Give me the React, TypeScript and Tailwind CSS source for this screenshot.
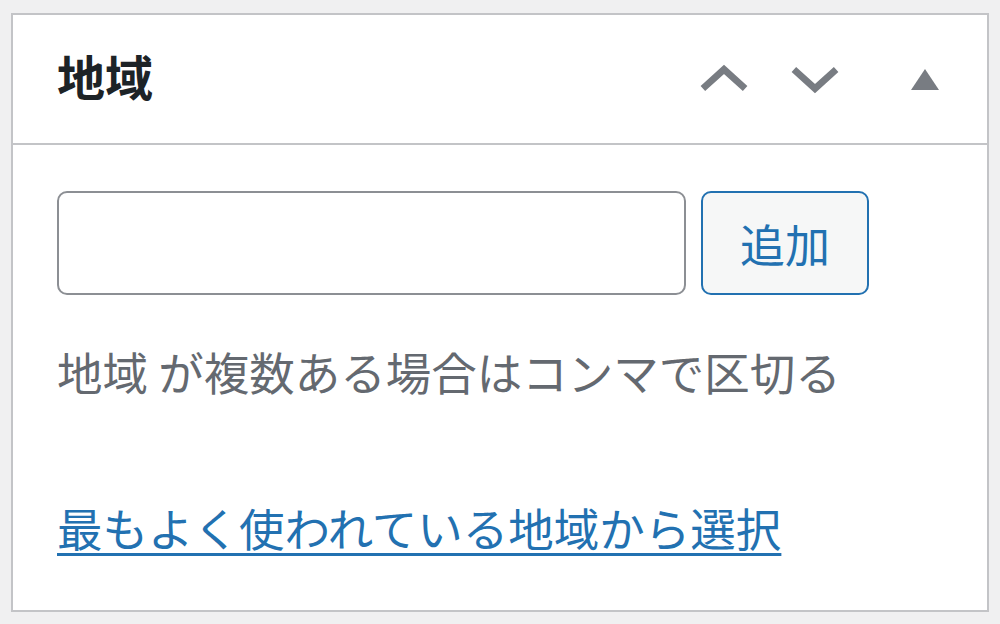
import React from "react";

const font = { fontFamily: '"Noto Sans CJK JP", "Noto Sans", sans-serif' };

export default function App() {
  return (
    <div className="w-[1000px] h-[624px] bg-[#f0f0f1] pt-[13px] pl-[11px]" style={font}>
      <div className="w-[978px] h-[599px] border-2 border-[#c3c4c7] bg-white flex flex-col">
        <div className="h-[130px] border-b-2 border-[#c3c4c7] flex items-center pl-[44px] pr-[48px] shrink-0">
          <h2 className="text-[48px] font-bold text-[#1d2327] leading-none flex-1 mb-[8px]">地域</h2>
          <div className="flex items-center">
            <button className="w-[48px] h-[40px] flex items-center justify-center mr-[43px]">
              <svg width="50" height="30" viewBox="0 0 50 30">
                <polyline points="3,25 25,5 47,25" fill="none" stroke="#787c82" strokeWidth="7" />
              </svg>
            </button>
            <button className="w-[48px] h-[40px] flex items-center justify-center mr-[72px]">
              <svg width="50" height="30" viewBox="0 0 50 30">
                <polyline points="3,5 25,25 47,5" fill="none" stroke="#787c82" strokeWidth="7" />
              </svg>
            </button>
            <button className="w-[28px] h-[40px] flex items-center justify-center">
              <svg width="28" height="21" viewBox="0 0 28 21">
                <polygon points="14,0 28,21 0,21" fill="#787c82" />
              </svg>
            </button>
          </div>
        </div>
        <div className="pt-[46px] px-[44px]">
          <div className="flex items-center gap-[15px]">
            <input className="w-[629px] h-[104px] rounded-[10px] border-2 border-[#8c8f94] bg-white outline-none" />
            <button className="w-[168px] h-[104px] rounded-[10px] border-2 border-[#2271b1] bg-[#f6f7f7] text-[#2271b1] text-[45px] leading-none">
              追加
            </button>
          </div>
          <p className="mt-[50px] text-[45.5px] leading-[52px] text-[#646970] whitespace-nowrap">地域 が複数ある場合はコンマで区切る</p>
          <a href="#" className="block mt-[104px] text-[45.5px] leading-[52px] text-[#2271b1] underline decoration-[3px] underline-offset-[6px] w-fit whitespace-nowrap">
            最もよく使われている地域から選択
          </a>
        </div>
      </div>
    </div>
  );
}
